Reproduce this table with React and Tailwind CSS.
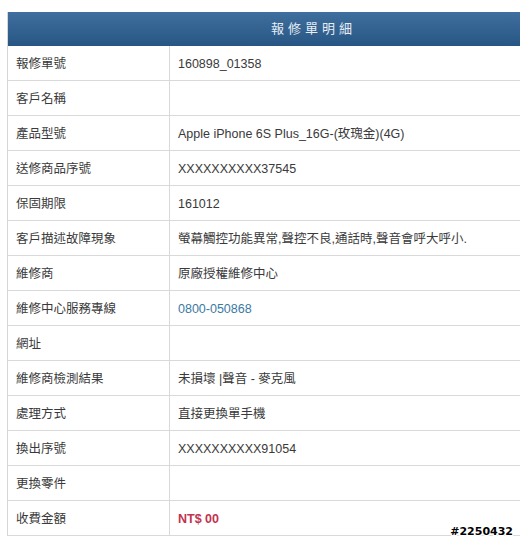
import React from "react";

const rows = [
  ["報修單號", "160898_01358"],
  ["客戶名稱", ""],
  ["產品型號", "Apple iPhone 6S Plus_16G-(玫瑰金)(4G)"],
  ["送修商品序號", "XXXXXXXXXX37545"],
  ["保固期限", "161012"],
  ["客戶描述故障現象", "螢幕觸控功能異常,聲控不良,通話時,聲音會呼大呼小."],
  ["維修商", "原廠授權維修中心"],
  ["維修中心服務專線", "0800-050868", "link"],
  ["網址", ""],
  ["維修商檢測結果", "未損壞 |聲音 - 麥克風"],
  ["處理方式", "直接更換單手機"],
  ["換出序號", "XXXXXXXXXX91054"],
  ["更換零件", ""],
  ["收費金額", "NT$ 00", "price"],
];

export default function App() {
  return (
    <div
      className="relative w-[520px] h-[540px] overflow-hidden bg-white pt-[12px] pl-[7px] text-[12.5px] text-[#3a3a3a]"
      style={{ fontFamily: '"Liberation Sans", "Noto Sans CJK TC", sans-serif' }}
    >
      <div className="w-[612px] border-l border-[#d6d6d6]">
        <div className="h-[34px] flex items-center justify-center bg-gradient-to-b from-[#3f6f9e] to-[#285684] text-[#e6edf4] text-[13px] tracking-[4px]">
          報修單明細
        </div>
        {rows.map(([label, value, kind], i) => (
          <div key={i} className="flex h-[35px] border-b border-[#d9d9d9]">
            <div className="w-[162px] shrink-0 border-r border-[#d9d9d9] flex items-center pl-[8px] pt-[2px]">
              {label}
            </div>
            <div
              className={
                "flex items-center pl-[8px] pt-[2px] " +
                (kind === "link"
                  ? "text-[#3b7aa3]"
                  : kind === "price"
                  ? "text-[#c2334f] font-bold"
                  : "")
              }
            >
              {value}
            </div>
          </div>
        ))}
      </div>
      <div
        className="absolute right-[7px] bottom-[3px] text-[11px] font-bold text-black leading-none"
        style={{
          fontFamily: '"DejaVu Sans", sans-serif',
          textShadow:
            "1px 0 0 #fff, -1px 0 0 #fff, 0 1px 0 #fff, 0 -1px 0 #fff, 1px 1px 0 #fff, -1px -1px 0 #fff, 1px -1px 0 #fff, -1px 1px 0 #fff",
        }}
      >
        #2250432
      </div>
    </div>
  );
}
